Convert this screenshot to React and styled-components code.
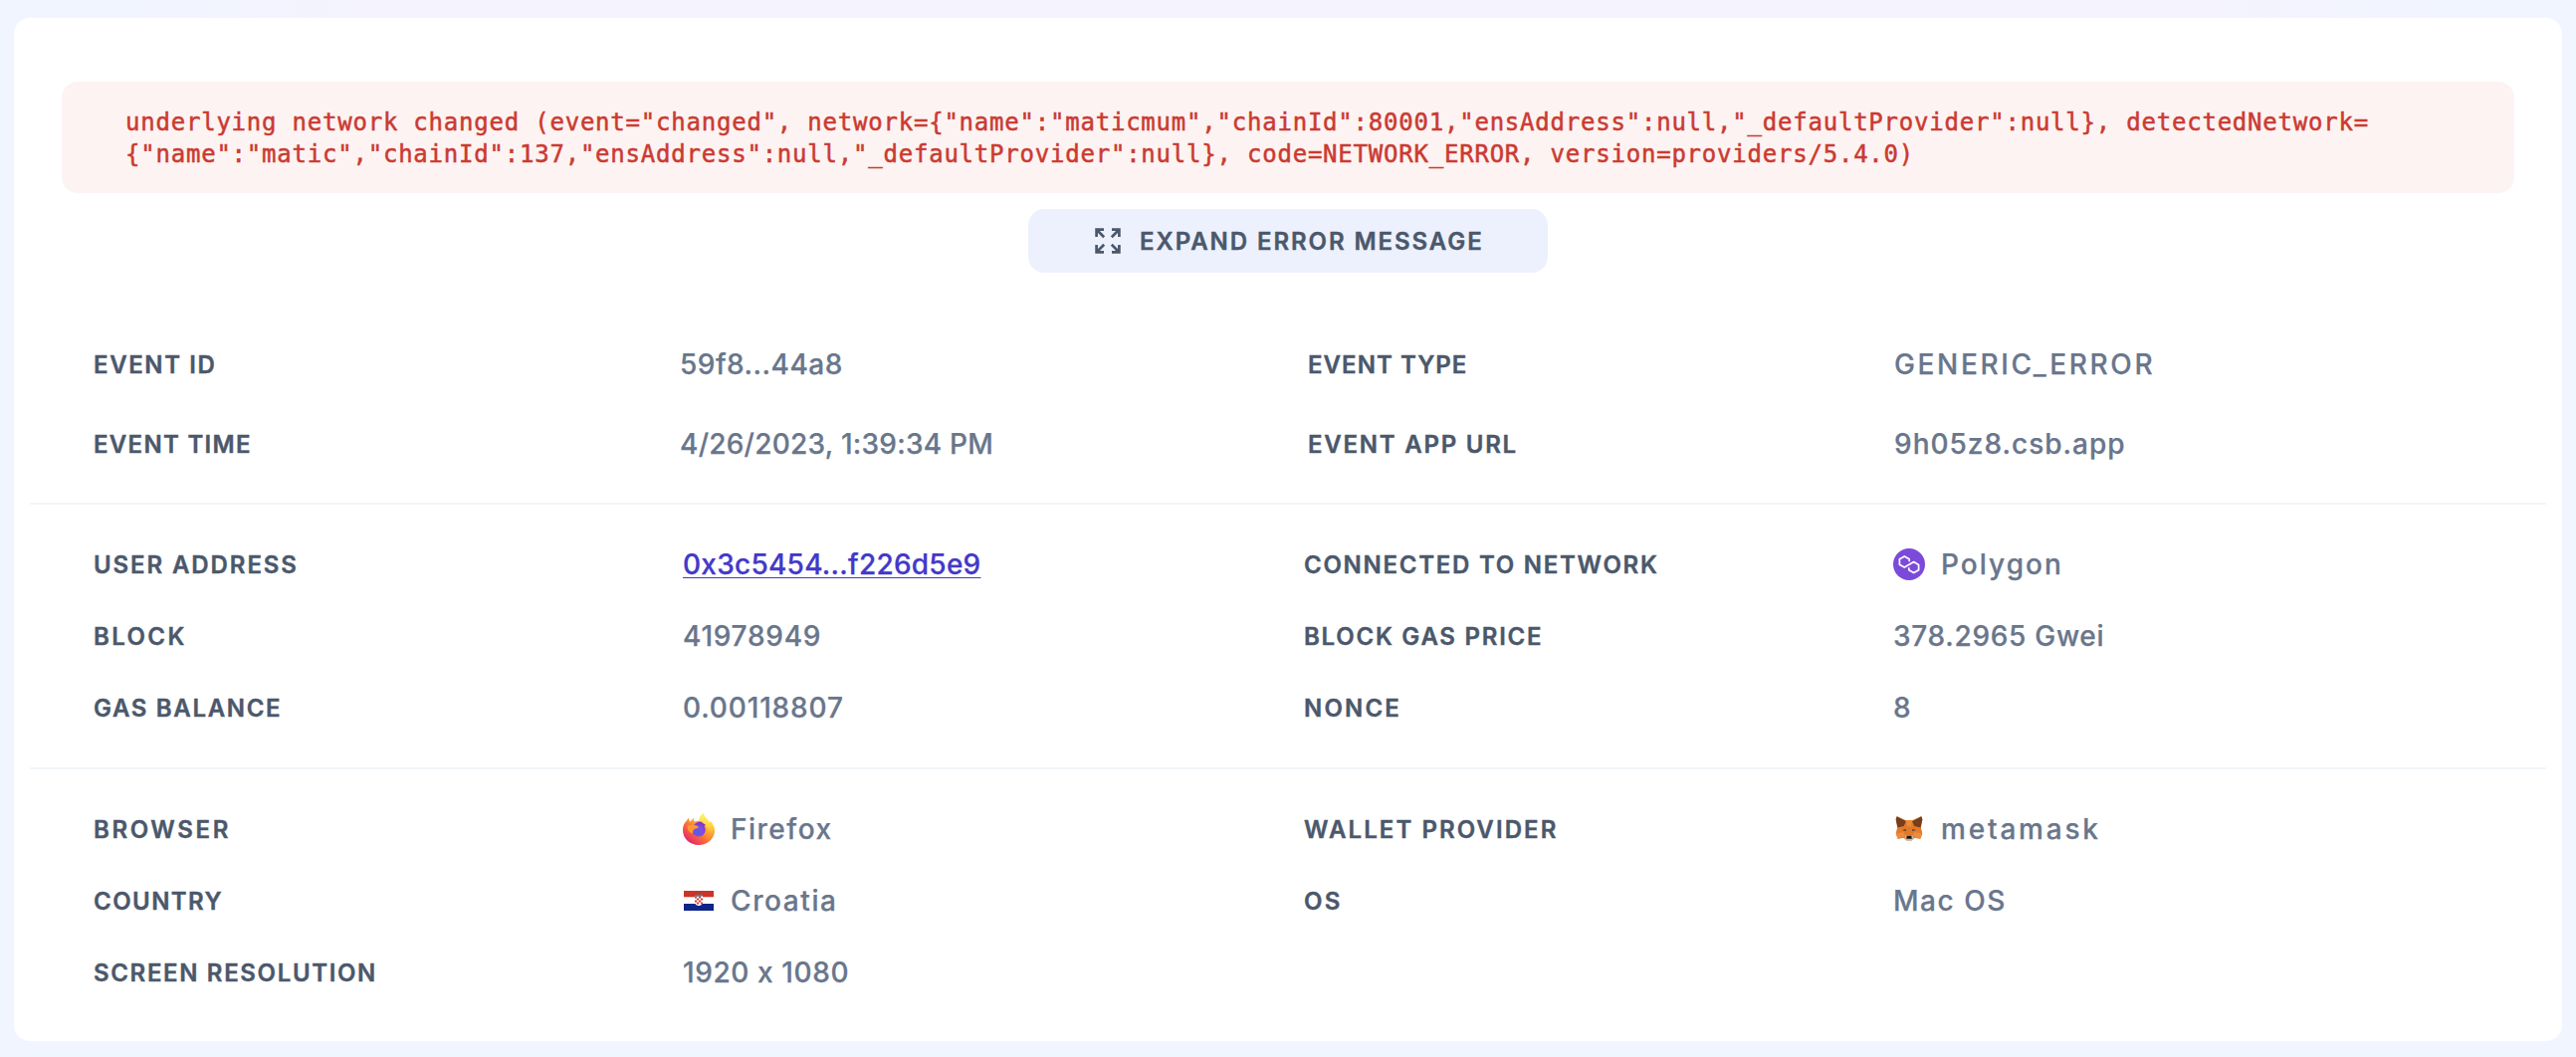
import React from "react";
import styled, { createGlobalStyle } from "styled-components";

const GlobalStyle = createGlobalStyle`
  * { box-sizing: border-box; }
  body {
    margin: 0;
    background: #f1f5ff;
    font-family: Inter, "Open Sans", sans-serif;
    font-feature-settings: "calt" 0;
  }
`;

const Page = styled.main`
  min-height: 1062px;
  padding: 18px 14px 16px;
  background:
    linear-gradient(90deg, #f1f5ff 5%, #f4f3fe 14%, #f4f3fe 86%, #f1f5ff 95%) top / 100% 18px no-repeat,
    #f1f5ff;
`;

const Card = styled.article`
  display: flex;
  flex-direction: column;
  height: 1028px;
  padding: 64px 16px 0;
  border-radius: 16px;
  background: #fff;
`;

const ErrorBox = styled.div`
  height: 112px;
  margin: 0 32px;
  padding: 25px 64px 23px;
  border-radius: 16px;
  background: #fcf3f2;
  color: #cb3a31;
  font: 400 24px/32px "DejaVu Sans Mono", monospace;
  letter-spacing: 0.78px;
  -webkit-text-stroke: 0.5px #cb3a31;
  white-space: pre;
`;

const ExpandButton = styled.button`
  display: flex;
  align-items: center;
  align-self: center;
  gap: 19px;
  width: 522px;
  height: 64px;
  margin: 16px 0 52px;
  padding: 0 0 0 67px;
  border: 0;
  border-radius: 16px;
  background: #edf1fe;
  color: #4b586b;
`;

const ButtonText = styled.span`
  padding-top: 2px;
  font: 600 24px/32px Inter, sans-serif;
  letter-spacing: 1.93px;
  -webkit-text-stroke: 0.4px #4b586b;
  white-space: nowrap;
`;

const Section = styled.section`
  display: grid;
  grid-template-columns: ${(p) => (p.$wide ? "589px 591px 589px 591px" : "repeat(4, 592px)")};
  grid-auto-rows: ${(p) => (p.$wide ? "80px" : "72px")};
  align-items: center;
  padding: ${(p) => (p.$wide ? "0 64px 19px" : "24px 64px")};
  & > *:nth-child(4n + 3),
  & > *:nth-child(4n + 4) { margin-left: ${(p) => (p.$wide ? "40px" : "32px")}; }
  & + & { border-top: 2px solid #f1f5f9; }
`;

const Label = styled.span`
  padding-top: 2px;
  color: #4b586b;
  font-size: 24px;
  font-weight: 600;
  line-height: 32px;
  letter-spacing: ${(p) => p.$track}px;
  -webkit-text-stroke: 0.4px #4b586b;
  white-space: nowrap;
`;

const Value = styled.span`
  display: flex;
  align-items: center;
  gap: 16px;
  color: #69768c;
  font-size: 28px;
  font-weight: 500;
  line-height: 36px;
  letter-spacing: ${(p) => p.$track}px;
  -webkit-text-stroke: 0.25px currentColor;
  white-space: nowrap;
`;

const Link = styled.a`
  color: #4338ca;
  text-decoration: underline 1px;
  text-underline-offset: 3px;
  text-decoration-skip-ink: none;
`;

const Icon = styled.svg`
  flex: none;
  display: block;
  width: ${(p) => p.$size || 32}px;
  height: ${(p) => p.$size || 32}px;
`;

const ExpandIcon = () => (
  <Icon $size={26} viewBox="0 0 26 26" fill="none" stroke="currentColor" strokeWidth="2.7">
    <path d="M1.600 9V1.600H9M2 2l7.200 7.200M17 1.600h7.400V9M24 2l-7.200 7.200M1.600 17v7.400H9M2 24l7.200-7.200M24.400 17v7.400H17M24 24l-7.200-7.200" />
  </Icon>
);

const PolygonIcon = () => (
  <Icon viewBox="0 0 32 32">
    <circle cx="16" cy="16" r="16" fill="#7b4adb" />
    <path
      d="M16.200 13.200v-2.500l-4.900-2.800-4.900 2.800v5.600l4.900 2.800 9.400-5.500 4.900 2.800v5.400l-4.900 2.800-4.900-2.800v-2.500"
      fill="none"
      stroke="#fff"
      strokeWidth="1.7"
      strokeLinejoin="round"
    />
  </Icon>
);

const FirefoxIcon = () => (
  <Icon viewBox="0 0 32 32">
    <defs>
      <linearGradient id="ffBody" x1="27" y1="4" x2="6" y2="29" gradientUnits="userSpaceOnUse">
        <stop offset="0.05" stopColor="#fff44f" />
        <stop offset="0.35" stopColor="#ffb02e" />
        <stop offset="0.65" stopColor="#fb6a3a" />
        <stop offset="0.9" stopColor="#ec3a5c" />
        <stop offset="1" stopColor="#d9267d" />
      </linearGradient>
      <radialGradient id="ffGlobe" cx="14" cy="19" r="10" gradientUnits="userSpaceOnUse">
        <stop offset="0" stopColor="#5b5ae6" />
        <stop offset="0.6" stopColor="#7a4fe4" />
        <stop offset="1" stopColor="#8a2fc4" />
      </radialGradient>
      <linearGradient id="ffFlame" x1="23" y1="0" x2="27" y2="28" gradientUnits="userSpaceOnUse">
        <stop offset="0" stopColor="#fff36b" />
        <stop offset="0.5" stopColor="#ffd23c" />
        <stop offset="1" stopColor="#fd7436" />
      </linearGradient>
    </defs>
    <path
      d="M5.700 4.800 7 8.700 11 5l.3 3.600C13.300 7.600 15 7.700 16.500 8.200 16.200 4.500 18.500 1.500 20.800 0c.3 3.500 2.800 5 4.700 7.500l1.200 2.500.8-2.300C30.500 11 32 14 31.900 18c-.4 8-7.400 14-15.900 14C7 32 0 25.500 0 17c0-4.500 1.500-7 3.700-9.200Z"
      fill="url(#ffBody)"
    />
    <path
      d="M20.800 0c.3 3.500 2.800 5 4.700 7.500l1.200 2.500.8-2.300C30.500 11 32 14 31.900 18c-.3 4.500-3 8.500-6.500 11 2-4 3-9 .2-14C23.500 11 17 10 16.500 8.200 16.500 4.500 18.500 1.500 20.800 0Z"
      fill="url(#ffFlame)"
    />
    <path d="M14 9.500c2.500-1.500 5-1 6.500.8l2.400 1.400-1.400 1.300c1.400 2 1.500 4.500.5 6.500-1.300 2.600-3.600 4.200-6.500 4-4-.3-6.500-3.500-6.200-7 .2-2.800 2-5.800 4.700-7Z" fill="url(#ffGlobe)" />
    <path d="M4.500 13.300c3-1.500 7-2 11.200.3 0 1.600-2.400 2-4.100 2.500-1.300 1.200-1.900 2.500-1.600 4.300C6 19.500 4.500 16.500 4.500 13.300Z" fill="#ff9a32" />
  </Icon>
);

const CroatiaFlag = () => (
  <Icon viewBox="0 0 32 32">
    <path d="M1 6h30v6.500H1z" fill="#cb3427" />
    <path d="M1 12.500h30V19H1z" fill="#fff" />
    <path d="M1 19h30v7H1z" fill="#0f2688" />
    <path d="M12 11h8v6.500c0 2-2 3.300-4 3.500-2-.2-4-1.500-4-3.500Z" fill="#fff" />
    <path
      d="M12 11.500h2v2h-2zm4 0h2v2h-2zm-2 2h2v2h-2zm4 0h2v2h-2zm-6 2h2v2h-2zm4 0h2v2h-2zm-2 2h2v2h-2zm4 0h2v1l-1 1h-1z"
      fill="#dc3b35"
    />
    <path d="M12 9.500l1.500.7L15 9.300l1.500.9L18 9.300l1.800.9-.6 1.600h-6.700Z" fill="#57788f" />
  </Icon>
);

const MetamaskIcon = () => (
  <Icon viewBox="0 0 32 32">
    <path d="m3.700 3.300 9.300 4h6l9.300-4 1.200 2.900-1.800 8.300 1.600 6.300-2 5.200-5.600-1.200-3.200 2.600h-5l-3.200-2.600L4.700 26l-2-5.200 1.700-6.300L2.600 6.200Z" fill="#e2792a" />
    <path d="m12.400 7.300h7.200l-1.800 6h-3.600Z" fill="#ec8a38" />
    <path d="m3.700 3.300 9.200 5-2.300 5-6.200 1.400-1.700-8.400ZM28.300 3.300l-9.200 5 2.300 5 6.200 1.400 1.700-8.400Z" fill="#763e1b" />
    <path d="m4.400 14.600 6.200-1.300.4 5.500-8.200 1.700ZM27.600 14.600l-6.200-1.300-.4 5.500 8.200 1.700Z" fill="#e57a2b" />
    <path d="m2.800 20.500 8.200-1.500 1 4-7.200 2.600ZM29.200 20.500 21 19l-1 4 7.200 2.600Z" fill="#f08b3e" />
    <path d="m9 17.100 3.600-1 .4 2ZM23 17.100l-3.600-1-.4 2Z" fill="#344451" />
    <path d="m12.200 22.500 7.600 0 .7 3-1.800 2h-5.400l-1.800-2Z" fill="#c9b6a7" />
    <path d="M13.700 22.700h4.600l.5 3h-5.600Z" fill="#1d1916" />
  </Icon>
);

/* Each cell is [content, letter spacing in px]. */
const eventCells = [
  ["EVENT ID", 1.6], ["59f8...44a8", 0.5], ["EVENT TYPE", 1.05], ["GENERIC_ERROR", 2.65],
  ["EVENT TIME", 1.3], ["4/26/2023, 1:39:34 PM", 0.25], ["EVENT APP URL", 1.76], ["9h05z8.csb.app", 1],
];

const chainCells = [
  ["USER ADDRESS", 1.9], [<Link>0x3c5454...f226d5e9</Link>, 0.25],
  ["CONNECTED TO NETWORK", 1.74], [<><PolygonIcon />Polygon</>, 2.05],
  ["BLOCK", 2.4], ["41978949", 0.74], ["BLOCK GAS PRICE", 1.76], ["378.2965 Gwei", 0.7],
  ["GAS BALANCE", 1.66], ["0.00118807", 0.86], ["NONCE", 2.2], ["8", 0],
];

const clientCells = [
  ["BROWSER", 2.6], [<><FirefoxIcon />Firefox</>, 1.5],
  ["WALLET PROVIDER", 2.08], [<><MetamaskIcon />metamask</>, 2.8],
  ["COUNTRY", 1.45], [<><CroatiaFlag />Croatia</>, 1.6], ["OS", 2.2], ["Mac OS", 1.55],
  ["SCREEN RESOLUTION", 1.65], ["1920 x 1080", 0.6],
];

function Details({ cells, wide }) {
  return (
    <Section $wide={wide}>
      {cells.map(([content, track], i) => {
        const Cell = i % 2 === 0 ? Label : Value;
        return <Cell key={i} $track={track}>{content}</Cell>;
      })}
    </Section>
  );
}

export default function App() {
  return (
    <>
      <GlobalStyle />
      <Page>
        <Card>
          <ErrorBox>
            {'underlying network changed (event="changed", network={"name":"maticmum","chainId":80001,"ensAddress":null,"_defaultProvider":null}, detectedNetwork=\n{"name":"matic","chainId":137,"ensAddress":null,"_defaultProvider":null}, code=NETWORK_ERROR, version=providers/5.4.0)'}
          </ErrorBox>
          <ExpandButton>
            <ExpandIcon />
            <ButtonText>EXPAND ERROR MESSAGE</ButtonText>
          </ExpandButton>
          <Details cells={eventCells} wide />
          <Details cells={chainCells} />
          <Details cells={clientCells} />
        </Card>
      </Page>
    </>
  );
}
